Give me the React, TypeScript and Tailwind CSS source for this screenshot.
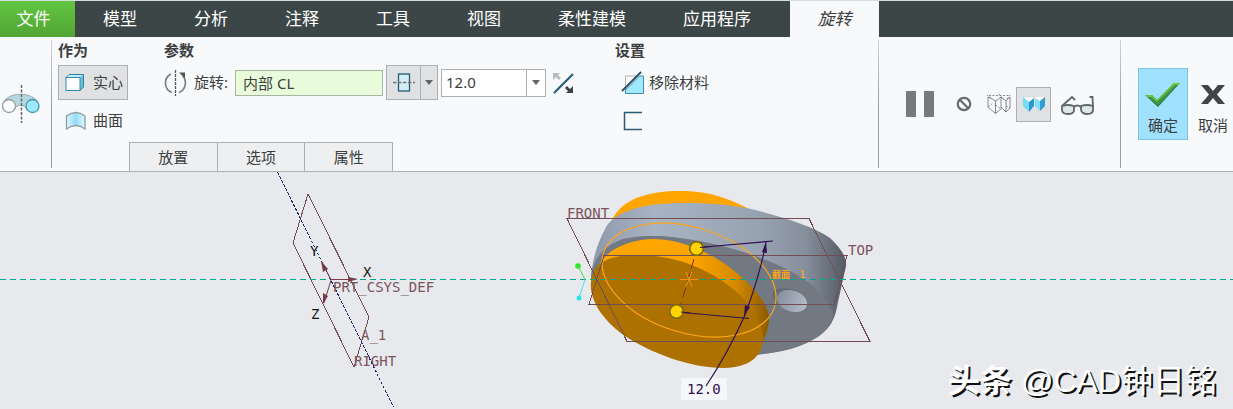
import type { ReactNode } from "react";

const tabs = ["模型", "分析", "注释", "工具", "视图", "柔性建模", "应用程序"];
const panels = ["放置", "选项", "属性"];

function Divider() {
	return <div className="w-px shrink-0 my-[3px] bg-linear-to-b from-gray-300 via-[#9a9da0] to-[#9a9da0]" />;
}

function Group({ title, className, children }: { title: string; className?: string; children: ReactNode }) {
	return (
		<section className={className}>
			<h2 className="font-bold leading-6 mb-[3px]">{title}</h2>
			{children}
		</section>
	);
}

function RevolveIcon() {
	return (
		<svg width="40" height="40" viewBox="0 0 40 40" fill="none">
			<path d="M3 20C6 7 35 7 38 20L27 26C26 20 15 20 14 26Z" fill="#b5d9e2" stroke="#9cabb0" />
			<circle cx="9" cy="22" r="6.5" fill="#fff" stroke="#8d9a9f" strokeWidth="1.3" />
			<circle cx="32.500" cy="22" r="6.500" fill="#9de7ff" stroke="#4596ad" strokeWidth="1.3" />
			<path d="M21.500 1V39" stroke="#666" strokeWidth="1.500" strokeDasharray="3 1.500" />
		</svg>
	);
}

function SolidIcon() {
	return (
		<svg width="20" height="20" viewBox="0 0 20 20" fill="none">
			<path d="M1 4.500L4 1.500H18.500V14L15 17.500Z" fill="#69bfdf" stroke="#2d7f9f" />
			<path d="M4 2H18L15 4.500H1.500Z" fill="#bcecfc" />
			<rect x="1" y="4.500" width="14" height="13" fill="#fff" stroke="#3788a8" />
		</svg>
	);
}

function SurfaceIcon() {
	return (
		<svg width="22" height="20" viewBox="0 0 22 20" fill="none">
			<defs>
				<linearGradient id="sheet"><stop stopColor="#e4f7fd" /><stop offset=".5" stopColor="#8edcf8" /><stop offset="1" stopColor="#e4f7fd" /></linearGradient>
			</defs>
			<path d="M1.500 5Q11 -2 20 5V18Q11 11 1.500 18Z" fill="url(#sheet)" stroke="#929da1" strokeWidth="1.300" />
		</svg>
	);
}

function RotateIcon() {
	return (
		<svg width="24" height="26" viewBox="0 0 24 26" fill="none" stroke="#7c7f81" strokeWidth="1.700">
			<path d="M7 4C-1 8 0 20 8 22.500M15 22.500C22 20 23 11 19 6" />
			<path d="M15 2.500H21V8.500Z" fill="#555" stroke="none" />
			<path d="M11.500 0V26" stroke="#555" strokeWidth="1.300" strokeDasharray="3 1" />
		</svg>
	);
}

function SymmetricIcon() {
	return (
		<svg width="24" height="22" viewBox="0 0 24 22" fill="none">
			<rect x="6.500" y="2" width="11" height="17" fill="#d5edf5" stroke="#275a77" strokeWidth="1.300" />
			<path d="M1 10.500H23" stroke="#777" strokeWidth="1.300" strokeDasharray="3.500 1.500" />
		</svg>
	);
}

function Caret() {
	return <svg width="8" height="5" viewBox="0 0 8 5"><path d="M0 0H8L4 5Z" fill="#626568" /></svg>;
}

function FlipIcon() {
	return (
		<svg width="22" height="22" viewBox="0 0 22 22" fill="none">
			<path d="M1 21L20 2" stroke="#235e7b" strokeWidth="2.200" />
			<path d="M0 1H7L5 3L8 6L6 8L3 5L0 8Z" fill="#b7b9bb" />
			<path d="M20 21H13L15 19L12 16L14 14L17 17L20 14Z" fill="#3e4143" />
		</svg>
	);
}

function RemoveIcon() {
	return (
		<svg width="24" height="24" viewBox="0 0 24 24" fill="none">
			<path d="M4.500 21V5H17" stroke="#b0b3b5" />
			<path d="M4.500 19V22.500H22.500V5H18.500Z" fill="#a1e9ff" stroke="#3e8fad" />
			<path d="M1 20L20 1" stroke="#2f5265" strokeWidth="2" />
		</svg>
	);
}

function NoPreviewIcon() {
	return (
		<svg width="16" height="16" viewBox="0 0 16 16" fill="none" stroke="#686b6e" strokeWidth="2.200">
			<circle cx="8" cy="8" r="6.200" />
			<path d="M3.500 3.500L12.500 12.500" />
		</svg>
	);
}

function WireIcon() {
	return (
		<svg width="26" height="24" viewBox="0 0 26 24" fill="none" stroke="#6a6d6f" strokeWidth=".8">
			<path d="M2 5L10 9L15 5M2 5V15L9.500 21.500L15 17V5M9.500 9V21.500M15 5L20 9L24 5V16L20 20L15 15M20 9V20" />
			<path d="M3 3.500H23M5 6L1 3M13 2L17 7M21 7L25 2M9.500 13L15 17M2 15L7 11M20 14L24 16" strokeDasharray="2 1.500" />
		</svg>
	);
}

function ShadedIcon() {
	return (
		<svg width="24" height="20" viewBox="0 0 24 20">
			<path d="M1 3H12V6L7 9Z" fill="#fff" stroke="#c4c8ca" strokeWidth=".5" />
			<path d="M1 3L7 8V18L1 12Z" fill="#78d9fa" />
			<path d="M12 4L7 8V18L12 12Z" fill="#279acb" />
			<path d="M13 3H23L18 7Z" fill="#fff" />
			<path d="M13 5L18 7V17L13 12Z" fill="#83defa" />
			<path d="M23 3L18 7V17L23 12Z" fill="#309fcd" />
		</svg>
	);
}

function GlassesIcon() {
	return (
		<svg width="36" height="22" viewBox="0 0 36 22" fill="none" stroke="#606769" strokeWidth="1.800">
			<path d="M2 11Q8 9 14 11V16Q13 19 8 19Q2 19 2 15ZM21 11Q27 9 33 11V15Q33 19 27 19Q22 19 21 15Z" fill="#dde9e9" />
			<path d="M14 12Q17 9 21 12M2 11L12 2L15 5M33 12L32.500 2L29.500 2" />
		</svg>
	);
}

function CheckIcon() {
	return (
		<svg width="36" height="28" viewBox="0 0 36 28">
			<path d="M0 14H7L12 19L29 2H35L13 26Z" fill="#257e43" />
			<path d="M0 14H7L12 19L29 2H35L33 4H30L12 21L6 16H2Z" fill="#69c934" />
			<path d="M3 16H6L12 22L30 4H32L13 24Z" fill="#439b52" />
		</svg>
	);
}

function ModelView() {
	return (
		<svg className="block w-full h-auto" viewBox="0 172 1233 237" fill="none" fontFamily="'DejaVu Sans Mono', monospace" fontSize="14">
			<defs>
				<linearGradient id="steel"><stop stopColor="#8d98a8" /><stop offset=".25" stopColor="#a8b3c3" /><stop offset=".65" stopColor="#98a3b2" /><stop offset=".84" stopColor="#868f9c" /><stop offset="1" stopColor="#555b64" /></linearGradient>
				<linearGradient id="amber"><stop stopColor="#ffa500" /><stop offset=".55" stopColor="#ffa500" /><stop offset=".8" stopColor="#d78b00" /><stop offset="1" stopColor="#8b5b00" /></linearGradient>
				<linearGradient id="hole"><stop stopColor="#858e9c" /><stop offset="1" stopColor="#b5bdc9" /></linearGradient>
			</defs>

			{/* solid body */}
			<path d="M612 220C622 198 650 191 680 191C709 191 728 198 751 210L690 216Z" fill="#ffa500" />
			<path d="M591 278C592 261 597 244 605 229C613 212 642 202 688 203C710 203 732 205 751 209C784 217 814 227 830 238C840 247 847 257 846 266L838 302C836 314 833 324 824 332C810 346 780 352 755 355L650 340Z" fill="url(#steel)" />
			<path d="M591 279C591 263 602 246 623 239C640 235 652 236 662 236C707 240 754 252 792 272C816 285 828 299 833 314C832 325 824 332 815 338C801 348 779 353 755 355L650 340Z" fill="#727983" />
			<path d="M597 271C601 253 625 239 655 239C689 240 724 259 748 283C763 298 770 311 769 321C768 332 764 340 760 346L700 340L600 300Z" fill="url(#amber)" />
			<path d="M591 282C592 263 609 255 637 255C680 255 715 272 740 295C754 309 764 328 763 341C762 354 751 368 724 368C690 368 651 353 625 336C602 320 589 299 591 282Z" fill="#ad7100" />
			<ellipse cx="790" cy="299" rx="18" ry="10" transform="rotate(18 790 299)" fill="#656c76" />
			<ellipse cx="792" cy="301" rx="15.500" ry="10.500" transform="rotate(18 792 301)" fill="url(#hole)" />
			<ellipse cx="689" cy="280" rx="89.700" ry="52.700" transform="rotate(17.400 689 280)" stroke="#ffa51c" strokeWidth="1.200" />

			{/* datum planes and axes */}
			<g stroke="#704c54" shapeRendering="crispEdges">
				<path d="M567 218.500H809L870 341.500H627Z" />
				<path d="M604 255.500H847L834 304.500H589Z" />
				<path d="M308 194L369 317L354 367L293 243Z" />
			</g>
			<path d="M0 279.500H1233" stroke="#00a98c" strokeDasharray="6 4" />
			<path d="M277.500 172L393.500 407" stroke="#18246d" strokeDasharray="3 1.500" shapeRendering="crispEdges" />
			<path d="M331 279.500H351M331 280L324 303M331 280L322 262" stroke="#743d49" />
			<path d="M358 279L348 277V282ZM323 304L323 293L328 296ZM321 261L328 269L323 272Z" fill="#743d49" />

			<path d="M585 279.500L578 266" stroke="#45e63c" />
			<path d="M585 279.500L579 298" stroke="#40e2ec" />
			<circle cx="578" cy="266" r="2.800" fill="#2fe82e" />
			<circle cx="579" cy="298" r="2.500" fill="#2be3f2" />

			{/* angle dimension */}
			<path d="M694 259L681 304" stroke="#792d1a" strokeDasharray="10 5" />
			<path d="M680 279.500H698M686 272L692 287M692 272L686 286" stroke="#f09419" />
			<rect x="681" y="378" width="46" height="22" fill="#f5f6fa" />
			<g stroke="#301050" strokeWidth="1.200">
				<path d="M698 247.500L773 241M677 312L749 318.500" />
				<path d="M766 242Q760 275 745 315Q728 353 706 386" />
			</g>
			<path d="M766 242L767 253L762 252ZM744 316L745 305L750 307Z" fill="#301050" />
			<g fill="#ffd400" stroke="#806c08" strokeWidth="1.800">
				<circle cx="696.500" cy="248.500" r="6.800" />
				<circle cx="676.500" cy="311.500" r="6.800" />
			</g>
			<path d="M700 247.500L712 246.500M681 312L690 313" stroke="#301050" />

			<g fill="#7c545c">
				<text x="567" y="218">FRONT</text>
				<text x="848" y="255">TOP</text>
				<text x="333" y="292">PRT_CSYS_DEF</text>
				<text x="361" y="340">A_1</text>
				<text x="354" y="366">RIGHT</text>
			</g>
			<g fill="#151515">
				<text x="310" y="256">Y</text>
				<text x="363" y="277">X</text>
				<text x="311" y="319">Z</text>
			</g>
			<text x="687" y="394" fill="#301050">12.0</text>
			<text x="772" y="278" fill="#ffa51c" fontSize="9" fontWeight="700" fontFamily="'Noto Sans CJK SC', sans-serif">截面</text>
			<text x="799" y="278" fill="#ffa51c" fontSize="11">1</text>
		</svg>
	);
}

export default function App() {
	return (
		<div className="bg-[#e8e9ed] text-[15px] text-[#3c3e40] font-['Noto_Sans','Noto_Sans_CJK_SC',sans-serif]">
			<nav className="flex h-[37px] border-t border-[#d2dddd] bg-[#3c4646] text-[17px] text-white whitespace-nowrap">
				<button className="w-[75px] pr-2 bg-linear-to-b from-[#62c540] to-[#50a535]">文件</button>
				<div className="flex gap-px">
					{tabs.map((tab) => (
						<button key={tab} className="px-7">{tab}</button>
					))}
				</div>
				<button className="ml-[11px] w-[89px] bg-[#f8f9fb] text-[#3c3e40] italic">旋转</button>
			</nav>

			<div className="flex border-b border-[#aeb1b4] bg-[#f8f9fb] whitespace-nowrap">
				<div className="w-[51px] flex items-center shrink-0"><RevolveIcon /></div>
				<Divider />
				<div className="flex-1 pt-px">
					<div className="flex pl-1.5">
						<Group title="作为" className="w-[106px]">
							<button className="flex items-center gap-2 w-[70px] h-[35px] pl-1.5 border border-[#acaeb0] bg-[#e0e1e3]"><SolidIcon />实心</button>
							<button className="flex items-center gap-1.5 w-[70px] h-[35px] pl-[7px] mt-[3px]"><SurfaceIcon />曲面</button>
						</Group>
						<Group title="参数" className="w-[451px]">
							<div className="flex items-center h-[35px]">
								<RotateIcon />
								<label htmlFor="axis" className="w-[47px] pl-1.5">旋转:</label>
								<input id="axis" defaultValue="内部 CL" className="w-[148px] h-[26px] px-[7px] border border-[#a9b5a2] bg-[#e8fcdc] outline-none" />
								<div className="flex ml-[3px] h-[35px] border border-[#acaeb0] bg-[#e0e1e3]">
									<button aria-label="对称" className="w-[33px] flex items-center justify-center"><SymmetricIcon /></button>
									<button aria-label="深度选项" className="w-[17px] flex items-center justify-center border-l border-[#acaeb0]"><Caret /></button>
								</div>
								<div className="flex ml-[3px] h-7 border border-[#acaeb0] bg-white">
									<input aria-label="角度" defaultValue="12.0" className="w-[84px] px-1 outline-none" />
									<button aria-label="角度列表" className="w-[19px] flex items-center justify-center border-l border-[#acaeb0]"><Caret /></button>
								</div>
								<button aria-label="反向" className="ml-[7px]"><FlipIcon /></button>
							</div>
						</Group>
						<Group title="设置">
							<button className="flex items-center gap-1 h-[35px] pl-1.5"><RemoveIcon />移除材料</button>
							<button aria-label="加厚草绘" className="flex items-center h-[35px] pl-2 mt-[3px]">
								<svg width="20" height="20" viewBox="0 0 20 20" fill="none"><path d="M19 1.500H1.500V18.500H19" stroke="#2b5b76" strokeWidth="1.500" /></svg>
							</button>
						</Group>
					</div>
					<div className="flex mt-1 ml-[77px] w-[264px] h-[29px] border-t border-l border-[#acaeb0] bg-[#eeeff1]">
						{panels.map((panel) => (
							<button key={panel} className="flex-1 border-r border-[#acaeb0]">{panel}</button>
						))}
					</div>
				</div>
				<Divider />
				<div className="flex items-center gap-1 px-[19px]">
					<button aria-label="暂停" className="flex justify-center gap-2 w-11">
						<span className="w-2.5 h-[26px] bg-[#77797b]" />
						<span className="w-2.5 h-[26px] bg-[#77797b]" />
					</button>
					<div className="flex">
						<button aria-label="无预览" className="flex items-center justify-center size-[35px]"><NoPreviewIcon /></button>
						<button aria-label="分离预览" className="flex items-center justify-center size-[35px]"><WireIcon /></button>
						<button aria-label="连接预览" className="flex items-center justify-center size-[35px] border border-[#acaeb0] bg-[#e0e1e3]"><ShadedIcon /></button>
					</div>
					<button aria-label="校验" className="flex justify-center w-[46px] pt-1"><GlassesIcon /></button>
				</div>
				<Divider />
				<div className="flex items-center gap-2 pl-[17px] pr-[3px]">
					<button className="flex flex-col items-center justify-between w-[50px] h-[72px] pt-3 pb-[3px] border border-[#78c6e8] bg-[#a0e1ff]"><CheckIcon />确定</button>
					<button className="flex flex-col items-center justify-between w-[34px] h-[72px] pt-4 pb-1">
						<svg width="26" height="22" viewBox="0 0 26 22"><path d="M1 1H8L13 7L18 1H25L17 10.500L25 20H18L13 14L8 20H1L9 10.500Z" fill="#414446" /></svg>
						取消
					</button>
				</div>
			</div>

			<main className="relative">
				<ModelView />
				<p className="absolute right-4 bottom-1 text-[32px] leading-12 text-white font-['Liberation_Sans','Noto_Sans_CJK_SC',sans-serif] [text-shadow:2px_2px_0_#111]">
					<span className="font-bold">头条</span> @CAD钟日铭
				</p>
			</main>
		</div>
	);
}
